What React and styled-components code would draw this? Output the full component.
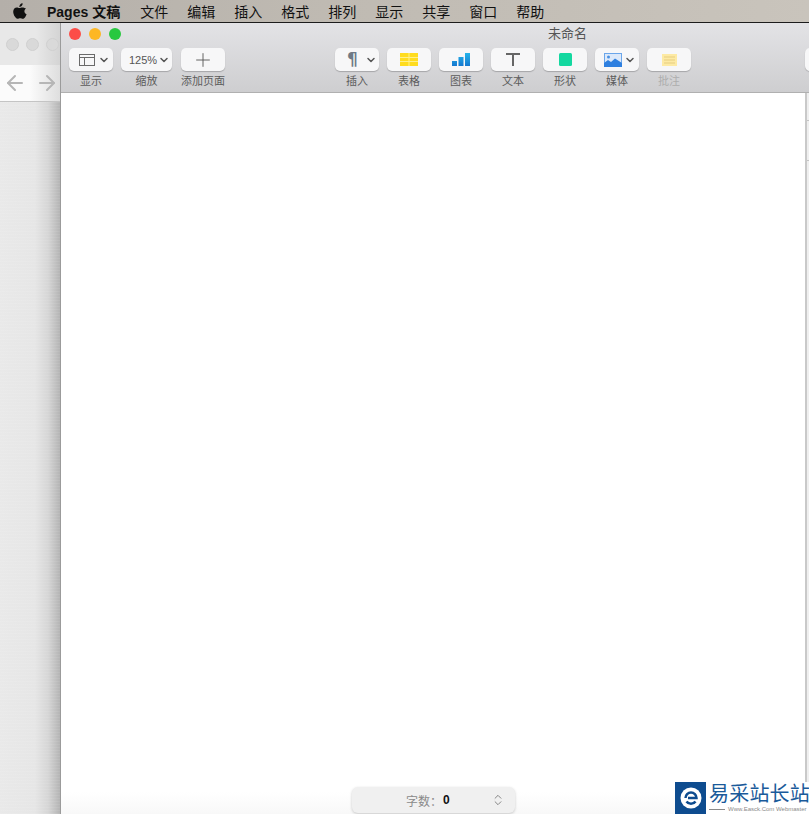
import React from 'react';
import styled, { createGlobalStyle } from 'styled-components';
import { ChevronDown, ChevronsUpDown, ArrowLeft, ArrowRight, Plus } from 'lucide-react';

const GlobalStyle = createGlobalStyle`
  html, body {
    margin: 0;
    padding: 0;
    height: 100%;
    overflow: hidden;
    background: #fff;
    font-family: 'Liberation Sans', 'Noto Sans CJK SC', sans-serif;
  }
`;

const Screen = styled.div`
  position: relative;
  width: 809px;
  height: 814px;
  overflow: hidden;
  display: flex;
  flex-direction: column;
`;

const MenuBar = styled.div`
  height: 22px;
  flex: none;
  display: flex;
  align-items: center;
  padding-left: 13px;
  background: linear-gradient(90deg, #b4afa9, #bfbab2 40%, #c9c4bc);
  border-bottom: 1px solid #1c1c1c;
  color: #111;
  font-size: 14px;
`;

const MenuItem = styled.span`
  margin-left: ${({ $gap }) => $gap || 19}px;
  font-weight: ${({ $bold }) => ($bold ? 700 : 400)};
  white-space: nowrap;
`;

const Desktop = styled.div`
  flex: 1;
  display: flex;
  min-height: 0;
`;

const BackWindow = styled.div`
  width: 60px;
  flex: none;
  display: flex;
  flex-direction: column;
`;

const BackTitle = styled.div`
  height: 42px;
  flex: none;
  display: flex;
  align-items: center;
  gap: 7px;
  padding: 0 0 0 6px;
  background: linear-gradient(90deg, #e8e8e8 60%, #d4d4d4);
  overflow: hidden;
`;

const GreyDot = styled.span`
  width: 13px;
  height: 13px;
  flex: none;
  border-radius: 50%;
  background: #d9d9d9;
  border: 1px solid #d0d0d0;
  box-sizing: border-box;
`;

const BackNav = styled.div`
  height: 36px;
  flex: none;
  display: flex;
  align-items: center;
  gap: 8px;
  padding-left: 3px;
  background: linear-gradient(90deg, #fbfbfb 50%, #dedede);
  border-bottom: 1px solid #c4c4c4;
  color: #b6b6b6;
`;

const BackContent = styled.div`
  flex: 1;
  background:
    repeating-linear-gradient(0deg, rgba(255, 255, 255, 0.07) 0 1px, transparent 1px 3px),
    linear-gradient(90deg, #e9e9e9 0, #e6e6e6 58%, #d6d6d6 80%, #b4b4b4 100%);
`;

const PagesWindow = styled.div`
  flex: 1;
  display: flex;
  flex-direction: column;
  border-left: 1px solid #9b9b9b;
  min-width: 0;
`;

const TitleBar = styled.div`
  flex: none;
  background: linear-gradient(180deg, #e3e3e6, #ceced0);
  border-bottom: 1px solid #b0b0b0;
  height: 69px;
  display: flex;
  flex-direction: column;
`;

const TitleRow = styled.div`
  height: 22px;
  padding-bottom: 3px;
  flex: none;
  display: flex;
  align-items: center;
  padding-left: 8px;
  gap: 8px;
  position: relative;
`;

const Light = styled.span`
  width: 12px;
  height: 12px;
  flex: none;
  border-radius: 50%;
  background: ${({ $color }) => $color};
`;

const WindowTitle = styled.span`
  position: absolute;
  left: 487px;
  top: 2px;
  font-size: 13px;
  line-height: 18px;
  color: #555;
`;

const Tools = styled.div`
  display: flex;
  padding-left: 8px;
`;

const ToolGroup = styled.div`
  display: flex;
  gap: 8px;
  margin-right: ${({ $after }) => $after || 0}px;
`;

const Tool = styled.div`
  width: ${({ $w }) => $w || 44}px;
  margin-left: ${({ $before }) => $before || 0}px;
  flex: none;
  display: flex;
  flex-direction: column;
  align-items: center;
  gap: 3px;
`;

const ToolButton = styled.div`
  width: 100%;
  height: 23px;
  box-sizing: border-box;
  display: flex;
  align-items: center;
  justify-content: ${({ $start }) => ($start !== undefined ? 'flex-start' : 'center')};
  padding-left: ${({ $start }) => $start || 0}px;
  gap: ${({ $gap }) => $gap || 0}px;
  background: #f7f7f8;
  border-radius: 5px;
  box-shadow: 0 1px 1px rgba(0, 0, 0, 0.22);
  color: #555;
  font-size: 11px;
`;

const ToolLabel = styled.span`
  font-size: 11px;
  line-height: 14px;
  color: ${({ $muted }) => ($muted ? '#adadad' : '#5c5c5c')};
  white-space: nowrap;
`;

const Pilcrow = styled.span`
  font-family: 'DejaVu Sans', sans-serif;
  width: 11px;
  display: flex;
  justify-content: center;
  font-size: 17px;
  font-weight: 700;
  color: #6f7a86;
  line-height: 1;
`;

const Canvas = styled.div`
  flex: 1;
  display: flex;
  justify-content: flex-end;
  background: linear-gradient(180deg, #fff calc(100% - 22px), #f8f8f8);
`;

const Inspector = styled.div`
  width: 2px;
  border-left: 2px solid #c9c9c9;
  background: #efefef;
  display: flex;
  flex-direction: column;
`;

const InspectorTab = styled.div`
  height: ${({ $h }) => $h}px;
  flex: none;
  border-bottom: 1px solid #c4c4c4;
`;

const CountPill = styled.div`
  position: absolute;
  left: 352px;
  top: 787px;
  width: 163px;
  height: 26px;
  box-sizing: border-box;
  display: flex;
  align-items: center;
  padding: 0 10px 0 54px;
  border-radius: 6px;
  background: #f0f0f0;
  box-shadow: 0 1px 3px rgba(0, 0, 0, 0.2);
  font-size: 12px;
  color: #8a8a8a;
`;

const CountValue = styled.b`
  margin-left: 1px;
  color: #111;
  flex: 1;
`;

const Watermark = styled.div`
  position: absolute;
  left: 675px;
  top: 782px;
  width: 134px;
  height: 32px;
  display: flex;
  background: #fff;
`;

const WatermarkBadge = styled.div`
  width: 31px;
  height: 32px;
  flex: none;
  display: flex;
  align-items: center;
  justify-content: center;
  background: #0e4c8f;
`;

const WatermarkText = styled.div`
  display: flex;
  flex-direction: column;
  padding: 2px 0 0 3px;
  overflow: hidden;
`;

const WatermarkTitle = styled.span`
  font-size: 20px;
  line-height: 21px;
  letter-spacing: 0.2px;
  color: #1a5a9a;
  white-space: nowrap;
`;

const WatermarkSub = styled.div`
  display: flex;
  align-items: center;
  gap: 3px;
  font-size: 6px;
  line-height: 8px;
  color: #8a8a8a;
  white-space: nowrap;
`;

const WatermarkRule = styled.span`
  width: 16px;
  height: 1px;
  flex: none;
  background: #8a8a8a;
`;

const AppleLogo = () => (
  <svg width="14" height="16" viewBox="0 0 14 16" fill="#111">
    <path d="M9.6 0.2c.1 1-.3 1.9-.8 2.6-.6.7-1.5 1.2-2.4 1.1-.1-.9.3-1.9.8-2.5C7.8.7 8.8.2 9.6.2z" />
    <path d="M13.1 5.5c-1.1.7-1.7 1.6-1.7 2.8 0 1.4.8 2.4 2.2 3-.3.9-.7 1.7-1.3 2.6-.8 1.1-1.5 1.9-2.5 1.9s-1.4-.6-2.6-.6-1.7.6-2.6.6c-1 0-1.8-.9-2.6-2C.9 12.3.2 10.4.2 8.7c0-2.8 1.8-4.3 3.6-4.3 1 0 1.9.7 2.6.7s1.7-.7 2.8-.7c1.1 0 2.5.5 3.9 1.1z" />
  </svg>
);

const LayoutIcon = () => (
  <svg width="16" height="12" viewBox="0 0 16 12" fill="none" stroke="#6a6a6a" strokeWidth="1">
    <rect x="0.5" y="0.5" width="15" height="11" />
    <path d="M0.5 3.5h15M5.5 3.5v8" />
  </svg>
);

const TableIcon = () => (
  <svg width="18" height="13" viewBox="0 0 18 13">
    <rect width="18" height="13" fill="#ffdc1e" />
    <path d="M0 4.5h18M0 8.5h18M9 0v13" stroke="#fff08a" strokeWidth="1" />
  </svg>
);

const ChartIcon = () => (
  <svg width="18" height="13" viewBox="0 0 18 13">
    <defs>
      <linearGradient id="bar" x1="0" y1="0" x2="0" y2="13" gradientUnits="userSpaceOnUse">
        <stop offset="0" stopColor="#25b4ea" />
        <stop offset="1" stopColor="#1478d0" />
      </linearGradient>
    </defs>
    <rect x="0" y="8" width="5" height="5" fill="url(#bar)" />
    <rect x="6.5" y="4" width="5" height="9" fill="url(#bar)" />
    <rect x="13" y="0" width="5" height="13" fill="url(#bar)" />
  </svg>
);

const TextIcon = () => (
  <svg width="14" height="13" viewBox="0 0 14 13" fill="none" stroke="#666" strokeWidth="2">
    <path d="M0 1h14M7 1v12" />
  </svg>
);

const ShapeIcon = () => (
  <svg width="13" height="13" viewBox="0 0 13 13">
    <rect width="13" height="13" rx="1.5" fill="#14d8a0" />
  </svg>
);

const MediaIcon = () => (
  <svg width="18" height="14" viewBox="0 0 18 14">
    <rect x="0.5" y="0.5" width="17" height="13" fill="#dce9fa" stroke="#6ba6ea" />
    <circle cx="4.5" cy="4" r="1.5" fill="#4a90e2" />
    <path d="M0 14V10l4-3 3 2 4-3.5L18 10v4z" fill="#2f80e0" />
  </svg>
);

const NoteIcon = () => (
  <svg width="15" height="12" viewBox="0 0 15 12">
    <rect width="15" height="12" fill="#fdeaa4" />
    <path d="M2 3h11M2 6h11M2 9h11" stroke="#e6cd80" strokeWidth="1" />
  </svg>
);

const WatermarkLogo = () => (
  <svg width="22" height="22" viewBox="0 0 22 22">
    <circle cx="11" cy="11" r="10.5" fill="#fff" />
    <path d="M5.5 11a5.5 5.5 0 0 1 11 0H8" fill="none" stroke="#0e4c8f" strokeWidth="2.5" />
    <path d="M6.5 14.5a5.5 5.5 0 0 0 9 0" fill="none" stroke="#0e4c8f" strokeWidth="2.5" />
  </svg>
);

const Caret = () => <ChevronDown size={12} strokeWidth={3} color="#555" />;

const menus = ['文件', '编辑', '插入', '格式', '排列', '显示', '共享', '窗口', '帮助'];

const middleTools = [
  { label: '插入', icon: <Pilcrow>¶</Pilcrow>, caret: true, start: 12, gap: 7 },
  { label: '表格', icon: <TableIcon /> },
  { label: '图表', icon: <ChartIcon /> },
  { label: '文本', icon: <TextIcon /> },
  { label: '形状', icon: <ShapeIcon /> },
  { label: '媒体', icon: <MediaIcon />, caret: true, start: 9, gap: 2 },
  { label: '批注', icon: <NoteIcon />, muted: true },
];

export default function App() {
  return (
    <Screen>
      <GlobalStyle />
      <MenuBar>
        <AppleLogo />
        <MenuItem $bold $gap={20}>Pages 文稿</MenuItem>
        {menus.map((m, i) => (
          <MenuItem key={m} $gap={i === 0 ? 20 : 19}>{m}</MenuItem>
        ))}
      </MenuBar>
      <Desktop>
        <BackWindow>
          <BackTitle>
            <GreyDot />
            <GreyDot />
            <GreyDot />
          </BackTitle>
          <BackNav>
            <ArrowLeft size={24} strokeWidth={2} />
            <ArrowRight size={24} strokeWidth={2} />
          </BackNav>
          <BackContent />
        </BackWindow>
        <PagesWindow>
          <TitleBar>
            <TitleRow>
              <Light $color="#fc4d47" />
              <Light $color="#fdb724" />
              <Light $color="#28c83f" />
              <WindowTitle>未命名</WindowTitle>
            </TitleRow>
            <Tools>
              <ToolGroup $after={110}>
                <Tool>
                  <ToolButton $start={10} $gap={3}>
                    <LayoutIcon />
                    <Caret />
                  </ToolButton>
                  <ToolLabel>显示</ToolLabel>
                </Tool>
                <Tool $w={51}>
                  <ToolButton $start={8} $gap={1}>
                    125%
                    <Caret />
                  </ToolButton>
                  <ToolLabel>缩放</ToolLabel>
                </Tool>
                <Tool $before={1}>
                  <ToolButton>
                    <Plus size={22} strokeWidth={1} color="#555" />
                  </ToolButton>
                  <ToolLabel>添加页面</ToolLabel>
                </Tool>
              </ToolGroup>
              <ToolGroup $after={114}>
                {middleTools.map((t) => (
                  <Tool key={t.label}>
                    <ToolButton $start={t.start} $gap={t.gap}>
                      {t.icon}
                      {t.caret && <Caret />}
                    </ToolButton>
                    <ToolLabel $muted={t.muted}>{t.label}</ToolLabel>
                  </Tool>
                ))}
              </ToolGroup>
              <Tool>
                <ToolButton />
              </Tool>
            </Tools>
          </TitleBar>
          <Canvas>
            <Inspector>
              <InspectorTab $h={27} />
              <InspectorTab $h={39} />
            </Inspector>
          </Canvas>
        </PagesWindow>
      </Desktop>
      <CountPill>
        字数：
        <CountValue>0</CountValue>
        <ChevronsUpDown size={14} strokeWidth={1.5} color="#777" />
      </CountPill>
      <Watermark>
        <WatermarkBadge>
          <WatermarkLogo />
        </WatermarkBadge>
        <WatermarkText>
          <WatermarkTitle>易采站长站</WatermarkTitle>
          <WatermarkSub>
            <WatermarkRule />
            Www.Easck.Com Webmaster
          </WatermarkSub>
        </WatermarkText>
      </Watermark>
    </Screen>
  );
}
